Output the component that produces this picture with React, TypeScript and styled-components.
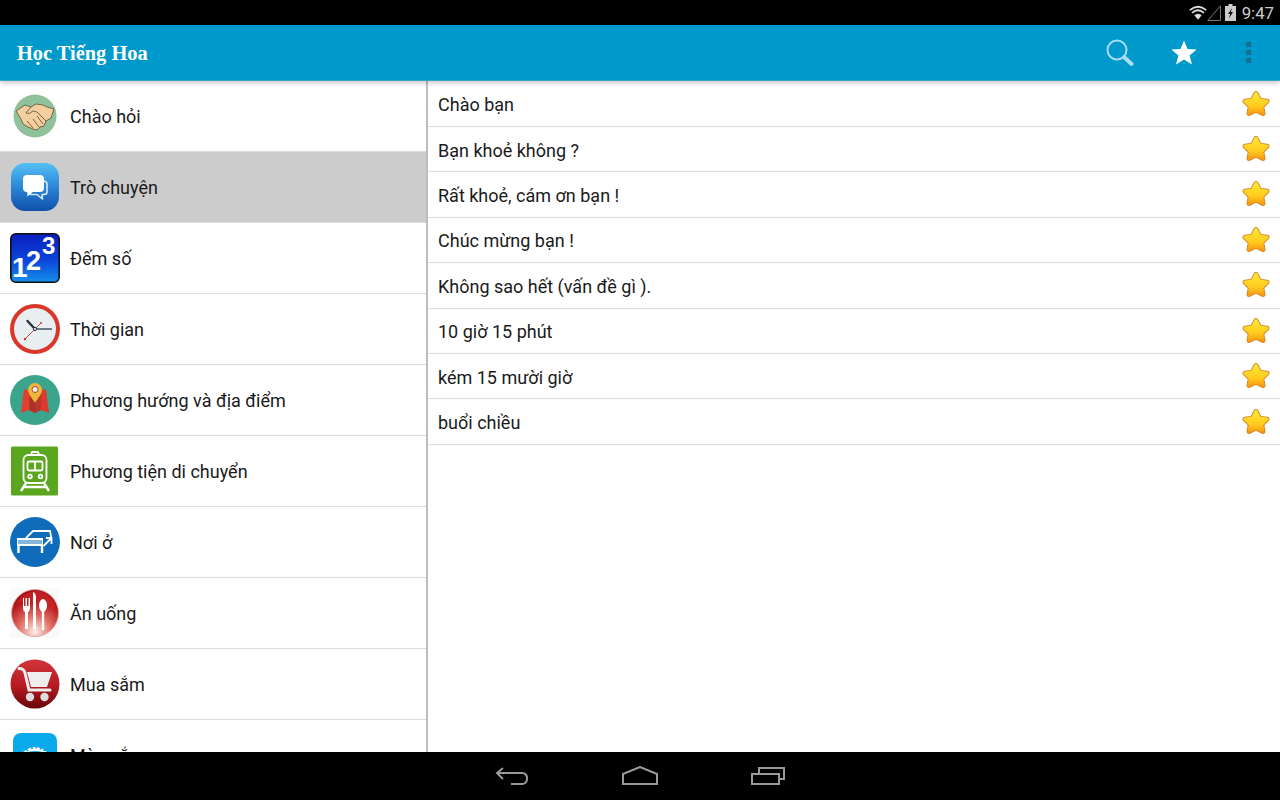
import React from "react";
import styled, { createGlobalStyle } from "styled-components";

const GlobalStyle = createGlobalStyle`
  html, body {
    margin: 0;
    padding: 0;
    background: #000;
  }
`;

function HandshakeIcon() {
  return (
    <svg width="44" height="44" viewBox="0 0 44 44">
      <circle cx="22" cy="22" r="21.5" fill="#8fc19a" />
      <path
        d="M3 17 L12 11 L18 13 L23 10 L30 11 L34 13 L41 15 L38 24 L33 27 L31 32 L27 33 L24 36 L20 35 L15 33 L10 30 L8 25 Z"
        fill="#f3cfa0"
        stroke="#6b5a3c"
        strokeWidth="0.9"
        strokeLinejoin="round"
      />
      <path
        d="M18 13 L13 19 Q16 21 20 17 L24 18 L33 27 M24 22 L30 30 M20 25 L26 33 M14 27 L20 34"
        fill="none"
        stroke="#6b5a3c"
        strokeWidth="0.9"
      />
    </svg>
  );
}

function ChatIcon() {
  return (
    <svg width="48" height="48" viewBox="0 0 48 48">
      <defs>
        <linearGradient id="chatBg" x1="0" y1="0" x2="0" y2="1">
          <stop offset="0" stopColor="#55c0f5" />
          <stop offset="0.5" stopColor="#2b86d8" />
          <stop offset="1" stopColor="#0f4fa8" />
        </linearGradient>
      </defs>
      <rect x="0" y="0" width="48" height="48" rx="14" fill="url(#chatBg)" />
      <path
        d="M33 18 Q36 18.5 36 21 L36 29 Q36 31.5 33 31.5 L31 31.5 L31.5 36 L26 31.5 L20 31.5 L17 30"
        fill="none"
        stroke="#d6e8fa"
        strokeWidth="1.6"
        strokeLinejoin="round"
      />
      <rect x="12" y="12" width="21" height="17" rx="4" fill="#fff" />
      <path d="M16 27 L16.5 33.5 L24 27 Z" fill="#fff" />
    </svg>
  );
}

function NumbersIcon() {
  return (
    <svg width="50" height="50" viewBox="0 0 50 50">
      <defs>
        <linearGradient id="numBg" x1="0" y1="0" x2="0" y2="1">
          <stop offset="0" stopColor="#0a1fc0" />
          <stop offset="0.55" stopColor="#0b45dc" />
          <stop offset="1" stopColor="#1590ea" />
        </linearGradient>
      </defs>
      <rect x="0.8" y="0.8" width="48.4" height="48.4" rx="5" fill="url(#numBg)" stroke="#111" strokeWidth="1.6" />
      <text x="2" y="44" fontFamily="Liberation Sans, sans-serif" fontWeight="700" fontSize="28" fill="#fff">1</text>
      <text x="16" y="37" fontFamily="Liberation Sans, sans-serif" fontWeight="700" fontSize="27" fill="#fff">2</text>
      <text x="32" y="21" fontFamily="Liberation Sans, sans-serif" fontWeight="700" fontSize="24" fill="#fff">3</text>
    </svg>
  );
}

function ClockIcon() {
  return (
    <svg width="50" height="50" viewBox="0 0 50 50">
      <circle cx="25" cy="25" r="23" fill="#e9eef0" stroke="#d9372a" strokeWidth="4" />
      <path d="M25 25 L42 25" stroke="#3c4a55" strokeWidth="1.4" />
      <path d="M25 25 L17.5 17" stroke="#26323c" strokeWidth="2.4" strokeLinecap="round" />
      <path d="M31 19 L15 35" stroke="#c93a30" strokeWidth="0.9" />
      <circle cx="31" cy="19" r="1" fill="#c93a30" />
      <circle cx="15" cy="35" r="1.2" fill="#c93a30" />
      <circle cx="25" cy="25" r="1.6" fill="#e9eef0" stroke="#26323c" strokeWidth="1" />
    </svg>
  );
}

function MapIcon() {
  return (
    <svg width="50" height="50" viewBox="0 0 50 50">
      <circle cx="25" cy="25" r="25" fill="#3aa58c" />
      <path d="M14 14 L20 16 L25 21 L25 38 L19 35 L11 38 Z" fill="#e53e2f" />
      <path d="M25 21 L30 16 L36 14 L39 38 L31 35 L25 38 Z" fill="#dc3a2c" />
      <path d="M20 16 L25 21 L25 38 L19 35 Z" fill="#a93227" />
      <path d="M31 16 L25 21 L25 38 L31 35 Z" fill="#bb3529" />
      <path d="M25 27.5 Q18 19 18 15 A7 7 0 0 1 32 15 Q32 19 25 27.5 Z" fill="#f0b63c" />
      <circle cx="25" cy="14.5" r="3" fill="#f4f1e6" stroke="#a5493a" strokeWidth="1" />
    </svg>
  );
}

function TrainIcon() {
  return (
    <svg width="48" height="50" viewBox="0 0 48 50">
      <rect x="0" y="0.5" width="47" height="49" rx="1.5" fill="#5aa61e" />
      <g fill="none" stroke="#fff" strokeWidth="1.8">
        <rect x="12.5" y="9" width="23" height="28" rx="5" />
        <rect x="16.5" y="15.5" width="15" height="9" rx="1.5" />
        <path d="M24 15.5 V24.5" />
        <rect x="20.5" y="6" width="7" height="3" rx="1" />
        <circle cx="19" cy="30.5" r="1.8" />
        <circle cx="29.5" cy="30.5" r="1.8" />
        <path d="M15 37 L10 45 M33 37 L38 45 M13 41 H35" strokeWidth="2.4" />
      </g>
    </svg>
  );
}

function BedIcon() {
  return (
    <svg width="50" height="50" viewBox="0 0 50 50">
      <circle cx="25" cy="25" r="25" fill="#0f6cba" />
      <path
        d="M16 21 L23 14 L40 14 L41.5 22 M33.5 29 L41.5 21 M41.5 27 V21 H36"
        fill="none"
        stroke="#fff"
        strokeWidth="1.8"
      />
      <rect x="7" y="21" width="26" height="8" fill="#fff" />
      <path
        d="M9 23 V27 M11 23 V27 M13 23 V27 M15 23 V27 M17 23 V27 M19 23 V27 M21 23 V27 M23 23 V27 M25 23 V27 M27 23 V27 M29 23 V27 M31 23 V27"
        stroke="#0f6cba"
        strokeWidth="1"
      />
      <path d="M8.5 29 V36 M32 29 V36" stroke="#fff" strokeWidth="2.4" fill="none" />
    </svg>
  );
}

function FoodIcon() {
  return (
    <svg width="50" height="50" viewBox="0 0 50 50">
      <defs>
        <radialGradient id="foodBg" cx="0.5" cy="0.9" r="0.9">
          <stop offset="0" stopColor="#fdf0ec" />
          <stop offset="0.4" stopColor="#e06a60" />
          <stop offset="0.75" stopColor="#b5171a" />
          <stop offset="1" stopColor="#9c0d0f" />
        </radialGradient>
      </defs>
      <rect width="50" height="50" fill="#fafafa" />
      <circle cx="25" cy="25" r="23.5" fill="url(#foodBg)" stroke="#e3a7a4" strokeWidth="1" />
      <path d="M6 16 Q20 8 30 18 Q38 25 46 20 Q44 8 30 3 Q14 2 6 16 Z" fill="#c9272a" opacity="0.75" />
      <g fill="#fff">
        <path d="M13 10 H14 V18 H15.5 V10 H17 V18 H18.5 V10 H20 V20 Q20 23 18 24 L18 41 H15 L15 24 Q13 23 13 20 Z" />
        <path d="M23 4 Q26 5 26 10 L26 41 H23 Z" />
        <ellipse cx="33" cy="17.5" rx="4" ry="6.5" />
        <rect x="31.8" y="23" width="2.4" height="19" />
      </g>
    </svg>
  );
}

function CartIcon() {
  return (
    <svg width="50" height="50" viewBox="0 0 50 50">
      <defs>
        <linearGradient id="cartBg" x1="0" y1="0" x2="0" y2="1">
          <stop offset="0" stopColor="#d0353c" />
          <stop offset="0.55" stopColor="#b41a20" />
          <stop offset="1" stopColor="#6a0508" />
        </linearGradient>
      </defs>
      <circle cx="25" cy="25" r="24.5" fill="url(#cartBg)" />
      <path d="M9 9.5 Q14 9.5 15 14 L19 31 H40" fill="none" stroke="#eee" strokeWidth="3" strokeLinecap="round" />
      <path d="M17 13 H42 L37 28 H21 Z" fill="#eee" />
      <circle cx="20" cy="38" r="4.2" fill="#ddd" />
      <circle cx="34.5" cy="38" r="4.2" fill="#ddd" />
    </svg>
  );
}

function ColorIcon() {
  return (
    <svg width="44" height="44" viewBox="0 0 44 44">
      <rect width="44" height="44" rx="8" fill="#0aa9ea" />
      <path d="M7 22 Q22 6 37 22 Q22 14 7 22 Z" fill="#fff" />
      <path
        d="M13 16 L15 18 M18 13.5 L19.5 16 M23 13 L23.5 15.5 M28 14 L27.5 16.5 M32 16.5 L30.5 18"
        stroke="#0aa9ea"
        strokeWidth="1.6"
      />
    </svg>
  );
}

function GoldStar() {
  const star = "M15 3.5 L18.6 10.1 L26 11.2 L20.7 16.4 L22 23.5 L15 20.1 L8 23.5 L9.3 16.4 L4 11.2 L11.4 10.1 Z";
  return (
    <svg width="30" height="28" viewBox="0 0 30 28">
      <defs>
        <linearGradient id="goldStar" x1="0" y1="0" x2="0" y2="1">
          <stop offset="0" stopColor="#ffe834" />
          <stop offset="0.65" stopColor="#ffca1c" />
          <stop offset="1" stopColor="#f79c12" />
        </linearGradient>
      </defs>
      <path d={star} fill="#d98a2a" stroke="#d98a2a" strokeWidth="5" strokeLinejoin="round" />
      <path d={star} fill="url(#goldStar)" stroke="url(#goldStar)" strokeWidth="3" strokeLinejoin="round" />
    </svg>
  );
}

function SearchIcon() {
  return (
    <svg width="28" height="28" viewBox="0 0 28 28">
      <circle cx="11" cy="11" r="9.5" fill="none" stroke="#a8dcf0" strokeWidth="2" />
      <path d="M18 18 L25.5 25" stroke="#a8dcf0" strokeWidth="4" strokeLinecap="round" />
    </svg>
  );
}

function WhiteStar() {
  return (
    <svg width="26" height="25" viewBox="0 0 26 25">
      <path d="M13 0.5 L16.5 9 L25.7 9.6 L18.6 15.4 L21 24.4 L13 19.4 L5 24.4 L7.4 15.4 L0.3 9.6 L9.5 9 Z" fill="#fff" />
    </svg>
  );
}

function StatusIcons() {
  return (
    <StatusGroup>
      <svg width="18" height="16" viewBox="0 0 19 16">
        <path d="M0.8 5 Q9.5 -2.2 18.2 5" fill="none" stroke="#ddd" strokeWidth="1.8" />
        <path d="M3.2 7.8 Q9.5 2.4 15.8 7.8" fill="none" stroke="#ddd" strokeWidth="1.8" />
        <path d="M5.6 10.5 Q9.5 7.2 13.4 10.5 L9.5 15 Z" fill="#ddd" />
      </svg>
      <svg width="14" height="16" viewBox="0 0 14 16">
        <path d="M13.5 0.8 V15.5 H0.8 Z" fill="none" stroke="#777" strokeWidth="1" />
      </svg>
      <BatteryIcon width="11" height="17" viewBox="0 0 11 17">
        <path d="M3.5 0 H7.5 V2 H11 V17 H0 V2 H3.5 Z" fill="#ccc" />
        <path d="M7 4 L3 10 H5.2 L4 14.5 L8 8 H5.8 Z" fill="#111" />
      </BatteryIcon>
    </StatusGroup>
  );
}

const categories: { label: string; icon: React.ReactNode; active?: boolean }[] = [
  { label: "Chào hỏi", icon: <HandshakeIcon /> },
  { label: "Trò chuyện", icon: <ChatIcon />, active: true },
  { label: "Đếm số", icon: <NumbersIcon /> },
  { label: "Thời gian", icon: <ClockIcon /> },
  { label: "Phương hướng và địa điểm", icon: <MapIcon /> },
  { label: "Phương tiện di chuyển", icon: <TrainIcon /> },
  { label: "Nơi ở", icon: <BedIcon /> },
  { label: "Ăn uống", icon: <FoodIcon /> },
  { label: "Mua sắm", icon: <CartIcon /> },
  { label: "Màu sắc", icon: <ColorIcon /> },
];

const phrases = [
  "Chào bạn",
  "Bạn khoẻ không ?",
  "Rất khoẻ, cám ơn bạn !",
  "Chúc mừng bạn !",
  "Không sao hết (vấn đề gì ).",
  "10 giờ 15 phút",
  "kém 15 mười giờ",
  "buổi chiều",
];

export default function App() {
  return (
    <Screen>
      <GlobalStyle />
      <StatusBar>
        <StatusIcons />
        <Clock>9:47</Clock>
      </StatusBar>
      <AppBar>
        <Title>Học Tiếng Hoa</Title>
        <Actions>
          <ActionButton>
            <SearchIcon />
          </ActionButton>
          <ActionButton>
            <WhiteStar />
          </ActionButton>
          <ActionButton>
            <Overflow>
              <i />
              <i />
              <i />
            </Overflow>
          </ActionButton>
        </Actions>
      </AppBar>
      <Content>
        <CategoryList>
          {categories.map(({ label, icon, active }) => (
            <CategoryRow key={label} active={active}>
              <CategoryIcon>{icon}</CategoryIcon>
              <span>{label}</span>
            </CategoryRow>
          ))}
        </CategoryList>
        <PhraseList>
          {phrases.map((phrase) => (
            <PhraseRow key={phrase}>
              <PhraseText>{phrase}</PhraseText>
              <GoldStar />
            </PhraseRow>
          ))}
        </PhraseList>
      </Content>
      <NavBar>
        <svg width="34" height="20" viewBox="0 0 34 20">
          <path d="M8 2 L2 7 L8 13 M2 7 H27 Q32 7 32 12.5 Q32 18 27 18 H16" fill="none" stroke="#999" strokeWidth="2" />
        </svg>
        <svg width="36" height="20" viewBox="0 0 36 20">
          <path d="M1 18 V8 L18 1 L35 8 V18 Z" fill="none" stroke="#999" strokeWidth="2" />
        </svg>
        <svg width="34" height="20" viewBox="0 0 34 20">
          <path d="M8 7 V2 H33 V13 H29" fill="none" stroke="#999" strokeWidth="2" />
          <rect x="1" y="8" width="27" height="10" fill="none" stroke="#999" strokeWidth="2" />
        </svg>
      </NavBar>
    </Screen>
  );
}

const Screen = styled.div`
  width: 1280px;
  height: 800px;
  display: flex;
  flex-direction: column;
  overflow: hidden;
  background: #fff;
  font-family: Roboto, "Noto Sans", sans-serif;
`;

const StatusBar = styled.div`
  height: 25px;
  flex: none;
  background: #000;
  display: flex;
  align-items: center;
  justify-content: flex-end;
  padding-right: 6px;
  gap: 6px;
`;

const StatusGroup = styled.div`
  display: flex;
  align-items: center;
`;

const BatteryIcon = styled.svg`
  margin-left: 4px;
`;

const Clock = styled.span`
  color: #ccc;
  font-size: 16.8px;
`;

const AppBar = styled.header`
  position: relative;
  z-index: 2;
  height: 56px;
  flex: none;
  box-sizing: border-box;
  background: #0099cc;
  border-bottom: 1px solid #3aa2c6;
  box-shadow: 0 2px 5px rgba(0, 0, 0, 0.22);
  display: flex;
  align-items: center;
  justify-content: space-between;
  padding-left: 17px;
`;

const Title = styled.h1`
  margin: 2px 0 0;
  color: #fff;
  font-family: "Liberation Serif", serif;
  font-size: 20.4px;
  font-weight: 700;
`;

const Actions = styled.div`
  display: flex;
  height: 100%;
`;

const ActionButton = styled.div`
  width: 64px;
  display: flex;
  align-items: center;
  justify-content: center;
`;

const Overflow = styled.div`
  display: flex;
  flex-direction: column;
  gap: 3px;

  i {
    display: block;
    width: 5px;
    height: 5px;
    background: #1a6f8c;
  }
`;

const Content = styled.main`
  flex: 1;
  min-height: 0;
  display: flex;
`;

const CategoryList = styled.nav`
  width: 428px;
  flex: none;
  box-sizing: border-box;
  border-right: 2px solid #bdbdbd;
  overflow: hidden;
`;

const CategoryRow = styled.div<{ active?: boolean }>`
  height: 71px;
  box-sizing: border-box;
  border-bottom: 1px solid #dcdcdc;
  background: ${({ active }) => (active ? "#cccccc" : "#fff")};
  display: flex;
  align-items: center;
  color: #1a1a1a;
  font-size: 18px;
`;

const CategoryIcon = styled.div`
  width: 70px;
  height: 50px;
  flex: none;
  display: flex;
  justify-content: center;
  align-items: center;
`;

const PhraseList = styled.section`
  flex: 1;
  min-width: 0;
  padding-top: 0.4px;
`;

const PhraseRow = styled.div`
  height: 45.44px;
  box-sizing: border-box;
  border-bottom: 1px solid #dcdcdc;
  display: flex;
  align-items: center;
  justify-content: space-between;
  padding: 0 9px 0 10px;
  color: #1a1a1a;
  font-size: 18px;
`;

const PhraseText = styled.span`
  padding-top: 2px;
`;

const NavBar = styled.footer`
  height: 48px;
  flex: none;
  background: #000;
  display: flex;
  align-items: center;
  justify-content: center;
  gap: 93px;
  box-sizing: border-box;
`;
